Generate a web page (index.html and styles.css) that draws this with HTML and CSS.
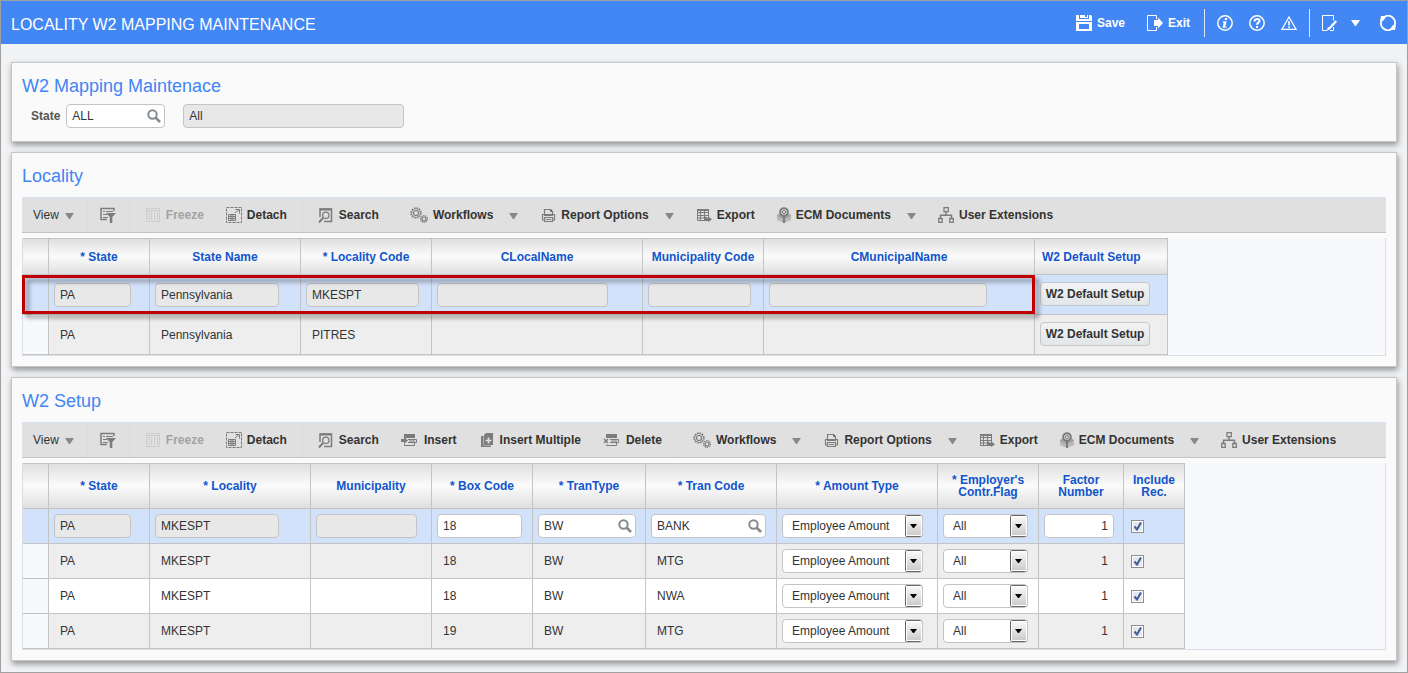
FILE: index.html
```
<!DOCTYPE html>
<html lang="en">
<head>
    <meta charset="UTF-8">
    <meta name="viewport" content="width=device-width, initial-scale=1.0">
    <title>Locality W2 Mapping Maintenance</title>
    <link rel="stylesheet" href="styles.css">
</head>
<body>
    <!-- icon set -->
    <svg class="sprite" aria-hidden="true">
        <symbol id="i-save" viewBox="0 0 16 16"><path fill="currentColor" fill-rule="evenodd" d="M0 0h3v4h10V0h2l1 1v5H0zM4 0h8v3H4zm5 0v2h2V0zM0 7h16v9H0zm3 2v5h10V9z"/></symbol>
        <symbol id="i-exit" viewBox="0 0 16 16"><path fill="none" stroke="currentColor" d="M9.500 4V.5h-9v15h9V12"/><path fill="currentColor" d="M7 5h4V2.500L16 8l-5 5.500V11H7z"/></symbol>
        <symbol id="i-info" viewBox="0 0 16 16"><circle cx="8" cy="8" r="7.200" fill="none" stroke="currentColor" stroke-width="1.500"/><path fill="currentColor" d="M8 3h2.500l-.5 2H7.600zM6 6.200h3.600L8.300 11.500h1.400l-.4 1.300H5.500l1.300-5.300H5.700z"/></symbol>
        <symbol id="i-help" viewBox="0 0 16 16"><circle cx="8" cy="8" r="7.200" fill="none" stroke="currentColor" stroke-width="1.500"/><path fill="none" stroke="currentColor" stroke-width="2" d="M5.500 6.500C5.500 3 10.600 3.200 10.500 6c0 1.800-2.500 1.600-2.500 3.800"/><path fill="currentColor" d="M7 11h2v2H7z"/></symbol>
        <symbol id="i-warn" viewBox="0 0 16 16"><path fill="none" stroke="currentColor" stroke-width="1.300" d="M8 2L1 14.300h14z"/><path fill="currentColor" d="M7.200 6h1.600v4.500H7.200zM7.200 11.500h1.600V13H7.200z"/></symbol>
        <symbol id="i-edit" viewBox="0 0 16 16"><path fill="none" stroke="currentColor" d="M11.500 5.500V.5H.5v15H5M8 15.500h3.500V12"/><path stroke="currentColor" stroke-width="2.200" d="M14.300 6L7 13.800"/><path fill="currentColor" d="M6 12l2.200 2L4.500 16z"/></symbol>
        <symbol id="i-refresh" viewBox="0 0 16 16"><path fill="none" stroke="currentColor" stroke-width="1.800" d="M5 1.500A7 7 0 0 1 14.500 10.500M11 14.500A7 7 0 0 1 1.500 5.500"/><path fill="currentColor" d="M1 1h5v1L3 6H0zM15 15h-5v-1l3-4h3z"/></symbol>
        <symbol id="i-arrow" viewBox="0 0 9 6"><path fill="currentColor" d="M0 0h9L5 6H4z"/></symbol>
        <symbol id="i-lens" viewBox="0 0 14 14"><circle cx="5.500" cy="5.500" r="4.200" fill="none" stroke="currentColor" stroke-width="2"/><path stroke="currentColor" stroke-width="2.600" d="M8.500 8.500l4.500 4.500"/></symbol>
        <symbol id="i-filter" viewBox="0 0 16 16"><path fill="none" stroke="currentColor" stroke-width="1.500" d="M14 4V1.500H1v11h6"/><path fill="none" stroke="currentColor" d="M3 4.500h2m1 0h7M3 7.500h4M3 10.500h5"/><path fill="currentColor" d="M6 6h10l-3.700 4v6h-2.500v-6z"/></symbol>
        <symbol id="i-freeze" viewBox="0 0 16 16"><path fill="none" stroke="currentColor" d="M1.500 1.500h13v13h-13zM1.500 3.500h13M6.500 5v8M9.500 5v8M12.500 5v8"/><path stroke="currentColor" stroke-width="2" stroke-dasharray="1 1" d="M4 5v8"/></symbol>
        <symbol id="i-detach" viewBox="0 0 16 16"><path fill="none" stroke="currentColor" stroke-dasharray="3 1" d="M.5 .5h15v15H.5z"/><path fill="none" stroke="currentColor" d="M2.500 7.500h7v6h-7zM3 9.500h6M3 11.500h6M5 8v5M7 8v5M9 6l4-3.500M9.500 2.500h4v4"/></symbol>
        <symbol id="i-search" viewBox="0 0 16 16"><path fill="none" stroke="currentColor" stroke-width="1.500" d="M2 10V2h11.500v12.500H6"/><path stroke="currentColor" stroke-width="2" d="M2 2.500h12M1 15.500l4-4.500"/><circle cx="7.800" cy="8.300" r="3.200" fill="none" stroke="currentColor" stroke-width="1.300"/></symbol>
        <symbol id="i-gears" viewBox="0 0 18 16"><g fill="none" stroke="currentColor"><circle cx="6" cy="6" r="5" stroke-width="1.400" stroke-dasharray="1.600 1"/><circle cx="6" cy="6" r="4.300" stroke-width=".7"/><circle cx="6" cy="6" r="2.500" stroke-width="1.200"/><circle cx="14" cy="12" r="3.400" stroke-width="1.200" stroke-dasharray="1.300 .8"/><circle cx="14" cy="12" r="2" stroke-width="1.200"/></g></symbol>
        <symbol id="i-print" viewBox="0 0 16 16"><path fill="none" stroke="currentColor" stroke-width="1.200" d="M4.500 7V2.500h6l2 2V7M4 13H2.500V7.500h12V13H13M4.500 10.500h8v4h-8z"/><path stroke="currentColor" d="M4 8.500h9M6 12.500h5M10.500 2.500v2h2"/></symbol>
        <symbol id="i-export" viewBox="0 0 16 16"><path fill="none" stroke="currentColor" d="M1.500 2.500h11v11h-11zM1.500 5.500h11M1.500 8.500h11M1.500 11h8M4.500 4v9.500M8.500 4v9.500"/><path fill="currentColor" d="M1 2h12v2H1zM8 9l4 2V9l4 3.500-4 2.500v-2H9z"/></symbol>
        <symbol id="i-ecm" viewBox="0 0 14 16"><path fill="currentColor" opacity=".6" d="M0 8l3-2 4 4 4-4 3 2v5l-7 3-7-3z"/><path fill="none" stroke="#e0e0e0" stroke-width=".7" d="M0 10l7 3.500 7-3.500M0 12l7 3.500 7-3.500"/><path fill="none" stroke="currentColor" stroke-width="2" d="M7 9v7"/><circle cx="7" cy="5" r="3.800" fill="#e0e0e0" stroke="currentColor" stroke-width="2"/><circle cx="7" cy="5" r="1.600" fill="none" stroke="currentColor"/></symbol>
        <symbol id="i-tree" viewBox="0 0 16 16"><path fill="none" stroke="currentColor" stroke-width="1.300" d="M6 .7h4.300v4H6zM.7 11.500h3.500v3.800H.7zM11.800 11.500h3.500v3.800h-3.500z"/><path fill="none" stroke="currentColor" stroke-width="1.500" d="M8 5v3M2.500 11V8.200h11V11"/></symbol>
        <symbol id="i-insert" viewBox="0 0 18 16"><path fill="currentColor" d="M3 2h11v4H3zM0 7h3V5l4 3.500L3 12v-2H0z"/><path fill="none" stroke="currentColor" d="M7 7.500h8.500v3H7M3.500 12v1.500h10V11M8 9h6"/></symbol>
        <symbol id="i-multi" viewBox="0 0 16 16"><path fill="currentColor" fill-rule="evenodd" d="M7 1h7v12H5V3zM8.700 5.500v2.200H6.500v1.600h2.200v2.200h1.600V9.300h2.200V7.700h-2.200V5.500z"/><path fill="currentColor" d="M2 4h2.500v9.500H12V15H2z"/></symbol>
        <symbol id="i-delete" viewBox="0 0 18 16"><path fill="currentColor" d="M3 2h11v4H3z"/><path fill="none" stroke="currentColor" d="M7 7.500h8.500v3H7M3.500 12.500v1h10V11M8 9h6"/><path stroke="currentColor" stroke-width="1.500" d="M1 7l4 4M5 7l-4 4"/></symbol>
    </svg>

    <header class="topbar">
        <h1>LOCALITY W2 MAPPING MAINTENANCE</h1>
        <div class="actions">
            <button class="action"><svg class="icon"><use href="#i-save"/></svg>Save</button>
            <button class="action"><svg class="icon"><use href="#i-exit"/></svg>Exit</button>
        </div>
        <div class="actions icons">
            <button class="action" aria-label="Information"><svg class="icon"><use href="#i-info"/></svg></button>
            <button class="action" aria-label="Help"><svg class="icon"><use href="#i-help"/></svg></button>
            <button class="action" aria-label="Warnings"><svg class="icon"><use href="#i-warn"/></svg></button>
        </div>
        <div class="actions last">
            <button class="action edit" aria-label="Edit page"><svg class="icon"><use href="#i-edit"/></svg><svg class="arrow"><use href="#i-arrow"/></svg></button>
            <button class="action" aria-label="Refresh"><svg class="icon"><use href="#i-refresh"/></svg></button>
        </div>
    </header>

    <main>
        <section class="panel filter">
            <h2>W2 Mapping Maintenace</h2>
            <div class="fields">
                <label for="state">State</label>
                <div class="lookup state">
                    <input id="state" type="text" value="ALL">
                    <button aria-label="Look up state"><svg><use href="#i-lens"/></svg></button>
                </div>
                <input class="box statename" type="text" value="All" aria-label="State description" readonly>
            </div>
        </section>

        <section class="panel">
            <h2>Locality</h2>
            <div class="toolbar">
                <div class="group view"><button class="tool">View<svg class="arrow"><use href="#i-arrow"/></svg></button></div>
                <div class="group query"><button class="tool" aria-label="Query by example"><svg class="icon"><use href="#i-filter"/></svg></button></div>
                <div class="group">
                    <button class="tool" disabled><svg class="icon"><use href="#i-freeze"/></svg>Freeze</button>
                    <button class="tool"><svg class="icon"><use href="#i-detach"/></svg>Detach</button>
                </div>
                <div class="group"><button class="tool"><svg class="icon"><use href="#i-search"/></svg>Search</button></div>
                <div class="group">
                    <button class="tool"><svg class="icon wide"><use href="#i-gears"/></svg>Workflows<svg class="arrow"><use href="#i-arrow"/></svg></button>
                    <button class="tool"><svg class="icon"><use href="#i-print"/></svg>Report Options<svg class="arrow"><use href="#i-arrow"/></svg></button>
                    <button class="tool"><svg class="icon"><use href="#i-export"/></svg>Export</button>
                    <button class="tool"><svg class="icon narrow"><use href="#i-ecm"/></svg>ECM Documents<svg class="arrow"><use href="#i-arrow"/></svg></button>
                    <button class="tool"><svg class="icon"><use href="#i-tree"/></svg>User Extensions</button>
                </div>
            </div>
            <div class="grid">
                <table class="locality">
                    <colgroup>
                        <col class="w-mark"><col class="w-100"><col class="w-150"><col class="w-130"><col class="w-210"><col class="w-120"><col class="w-270"><col class="w-132">
                    </colgroup>
                    <thead>
                        <tr>
                            <th></th>
                            <th>* State</th>
                            <th>State Name</th>
                            <th>* Locality Code</th>
                            <th>CLocalName</th>
                            <th>Municipality Code</th>
                            <th>CMunicipalName</th>
                            <th class="left">W2 Default Setup</th>
                        </tr>
                    </thead>
                    <tbody>
                        <tr class="selected">
                            <td></td>
                            <td class="edit"><input class="box f-77" type="text" value="PA" aria-label="State" readonly></td>
                            <td class="edit"><input class="box f-124" type="text" value="Pennsylvania" aria-label="State Name" readonly></td>
                            <td class="edit"><input class="box f-113" type="text" value="MKESPT" aria-label="Locality Code" readonly></td>
                            <td class="edit"><input class="box f-171" type="text" aria-label="CLocalName" readonly></td>
                            <td class="edit"><input class="box f-103" type="text" aria-label="Municipality Code" readonly></td>
                            <td class="edit"><input class="box f-218" type="text" aria-label="CMunicipalName" readonly></td>
                            <td class="edit"><button class="setup">W2 Default Setup</button></td>
                        </tr>
                        <tr>
                            <td></td>
                            <td>PA</td>
                            <td>Pennsylvania</td>
                            <td>PITRES</td>
                            <td></td>
                            <td></td>
                            <td></td>
                            <td class="edit"><button class="setup">W2 Default Setup</button></td>
                        </tr>
                    </tbody>
                </table>
                <div class="marker"></div>
            </div>
        </section>

        <section class="panel">
            <h2>W2 Setup</h2>
            <div class="toolbar">
                <div class="group view"><button class="tool">View<svg class="arrow"><use href="#i-arrow"/></svg></button></div>
                <div class="group query"><button class="tool" aria-label="Query by example"><svg class="icon"><use href="#i-filter"/></svg></button></div>
                <div class="group">
                    <button class="tool" disabled><svg class="icon"><use href="#i-freeze"/></svg>Freeze</button>
                    <button class="tool"><svg class="icon"><use href="#i-detach"/></svg>Detach</button>
                </div>
                <div class="group">
                    <button class="tool"><svg class="icon"><use href="#i-search"/></svg>Search</button>
                    <button class="tool"><svg class="icon wide"><use href="#i-insert"/></svg>Insert</button>
                    <button class="tool"><svg class="icon"><use href="#i-multi"/></svg>Insert Multiple</button>
                    <button class="tool"><svg class="icon wide"><use href="#i-delete"/></svg>Delete</button>
                </div>
                <div class="group">
                    <button class="tool"><svg class="icon wide"><use href="#i-gears"/></svg>Workflows<svg class="arrow"><use href="#i-arrow"/></svg></button>
                    <button class="tool"><svg class="icon"><use href="#i-print"/></svg>Report Options<svg class="arrow"><use href="#i-arrow"/></svg></button>
                    <button class="tool"><svg class="icon"><use href="#i-export"/></svg>Export</button>
                    <button class="tool"><svg class="icon narrow"><use href="#i-ecm"/></svg>ECM Documents<svg class="arrow"><use href="#i-arrow"/></svg></button>
                    <button class="tool"><svg class="icon"><use href="#i-tree"/></svg>User Extensions</button>
                </div>
            </div>
            <div class="grid">
                <table class="setups">
                    <colgroup>
                        <col class="w-mark"><col class="w-100"><col class="w-160"><col class="w-120"><col class="w-100"><col class="w-112"><col class="w-130"><col class="w-160"><col class="w-100"><col class="w-84"><col class="w-60">
                    </colgroup>
                    <thead>
                        <tr>
                            <th></th>
                            <th>* State</th>
                            <th>* Locality</th>
                            <th>Municipality</th>
                            <th>* Box Code</th>
                            <th>* TranType</th>
                            <th>* Tran Code</th>
                            <th>* Amount Type</th>
                            <th>* Employer's Contr.Flag</th>
                            <th>Factor Number</th>
                            <th>Include Rec.</th>
                        </tr>
                    </thead>
                    <tbody>
                        <tr class="selected">
                            <td></td>
                            <td class="edit"><input class="box f-77" type="text" value="PA" aria-label="State" readonly></td>
                            <td class="edit"><input class="box f-124" type="text" value="MKESPT" aria-label="Locality" readonly></td>
                            <td class="edit"><input class="box f-101" type="text" aria-label="Municipality" readonly></td>
                            <td class="edit"><input class="box f-85" type="text" value="18" aria-label="Box Code"></td>
                            <td class="edit"><div class="lookup f-98"><input type="text" value="BW" aria-label="TranType"><button aria-label="Look up TranType"><svg><use href="#i-lens"/></svg></button></div></td>
                            <td class="edit"><div class="lookup f-115"><input type="text" value="BANK" aria-label="Tran Code"><button aria-label="Look up Tran Code"><svg><use href="#i-lens"/></svg></button></div></td>
                            <td class="edit"><select class="f-141" aria-label="Amount Type"><option>Employee Amount</option></select></td>
                            <td class="edit"><select class="f-85" aria-label="Employer's Contr.Flag"><option>All</option></select></td>
                            <td class="edit"><input class="box num f-70" type="text" value="1" aria-label="Factor Number"></td>
                            <td class="check"><input type="checkbox" aria-label="Include Rec." checked></td>
                        </tr>
                        <tr>
                            <td></td>
                            <td>PA</td>
                            <td>MKESPT</td>
                            <td></td>
                            <td>18</td>
                            <td>BW</td>
                            <td>MTG</td>
                            <td class="edit"><select class="f-141" aria-label="Amount Type"><option>Employee Amount</option></select></td>
                            <td class="edit"><select class="f-85" aria-label="Employer's Contr.Flag"><option>All</option></select></td>
                            <td class="num">1</td>
                            <td class="check"><input type="checkbox" aria-label="Include Rec." checked></td>
                        </tr>
                        <tr class="plain">
                            <td></td>
                            <td>PA</td>
                            <td>MKESPT</td>
                            <td></td>
                            <td>18</td>
                            <td>BW</td>
                            <td>NWA</td>
                            <td class="edit"><select class="f-141" aria-label="Amount Type"><option>Employee Amount</option></select></td>
                            <td class="edit"><select class="f-85" aria-label="Employer's Contr.Flag"><option>All</option></select></td>
                            <td class="num">1</td>
                            <td class="check"><input type="checkbox" aria-label="Include Rec." checked></td>
                        </tr>
                        <tr>
                            <td></td>
                            <td>PA</td>
                            <td>MKESPT</td>
                            <td></td>
                            <td>19</td>
                            <td>BW</td>
                            <td>MTG</td>
                            <td class="edit"><select class="f-141" aria-label="Amount Type"><option>Employee Amount</option></select></td>
                            <td class="edit"><select class="f-85" aria-label="Employer's Contr.Flag"><option>All</option></select></td>
                            <td class="num">1</td>
                            <td class="check"><input type="checkbox" aria-label="Include Rec." checked></td>
                        </tr>
                    </tbody>
                </table>
            </div>
        </section>
    </main>
</body>
</html>
```
FILE: styles.css
```
* {
    box-sizing: border-box;
}

body {
    margin: 0;
    min-height: 100vh;
    border: 1px solid #a0a0a0;
    background-color: #f1f2f4;
    color: #333;
    font-family: "Liberation Sans", Arial, sans-serif;
    font-size: 12px;
}

button,
input,
select {
    margin: 0;
    font: inherit;
    color: inherit;
}

button {
    padding: 0;
    border: none;
    background: none;
    cursor: pointer;
}

.sprite {
    position: absolute;
    width: 0;
    height: 0;
}

.icon {
    flex: none;
    width: 16px;
    height: 16px;
}

.icon.wide {
    width: 18px;
}

.icon.narrow {
    width: 14px;
}

.arrow {
    flex: none;
    width: 9px;
    height: 6px;
}

/* top bar */
.topbar {
    display: flex;
    align-items: center;
    height: 43px;
    padding: 0 11px 0 10px;
    background-color: #4387f4;
    color: #fff;
}

.topbar h1 {
    flex: 1;
    margin: 0;
    padding-top: 4px;
    font-size: 16px;
    font-weight: normal;
}

.actions {
    display: flex;
    align-items: center;
    gap: 22px;
    height: 28px;
    padding-right: 14px;
}

.actions.icons {
    gap: 16px;
    padding: 0 12px;
    border: solid #dce8fd;
    border-width: 0 1px;
}

.actions.last {
    gap: 20px;
    padding: 0 0 0 12px;
}

.action {
    display: flex;
    align-items: center;
    gap: 5px;
    font-weight: bold;
}

.action.edit {
    gap: 13px;
}

/* panels */
main {
    display: flex;
    flex-direction: column;
    gap: 10px;
    padding: 18px 10px 11px;
}

.panel {
    padding: 12px 10px 10px;
    border: 1px solid #c4c6c8;
    background-color: #fafafa;
    box-shadow: 1px 3px 6px rgba(0, 0, 0, 0.4);
}

.panel h2 {
    margin: 0 0 10px;
    font-size: 18px;
    font-weight: normal;
    line-height: 22px;
    color: #4285f4;
}

.filter {
    padding-bottom: 13px;
}

.filter h2 {
    margin-bottom: 7px;
}

.fields {
    display: flex;
    align-items: center;
    padding-left: 9px;
}

.fields label {
    margin-right: 6px;
    font-weight: bold;
    color: #555;
}

/* form controls */
.box,
.lookup,
select {
    display: block;
    height: 24px;
    padding: 0 5px;
    border: 1px solid #c4c4c4;
    border-radius: 4px;
    background-color: #fff;
}

.box[readonly] {
    background-color: #e8e8e8;
}

.lookup {
    display: flex;
    align-items: center;
    padding-right: 3px;
}

.lookup input {
    flex: 1;
    min-width: 0;
    padding: 0;
    border: none;
    background: none;
}

.lookup svg {
    display: block;
    width: 14px;
    height: 14px;
    color: #858a8f;
}

.state {
    width: 99px;
    margin-right: 18px;
}

.statename {
    width: 221px;
}

select {
    appearance: none;
    padding: 0 20px 0 9px;
    background: #fff url("data:image/svg+xml,%3Csvg xmlns='http://www.w3.org/2000/svg' width='18' height='22'%3E%3ClinearGradient id='g' x2='0' y2='1'%3E%3Cstop stop-color='%23f8f8f8'/%3E%3Cstop offset='1' stop-color='%23ccc'/%3E%3C/linearGradient%3E%3Crect x='.5' y='.5' width='17' height='21' rx='1' fill='%23fff' stroke='%23666'/%3E%3Crect x='2' y='2' width='14' height='18' fill='url(%23g)'/%3E%3Cpath d='M5 9h7l-3 4h-1z'/%3E%3C/svg%3E") right center no-repeat;
    background-origin: border-box;
}

input[type="checkbox"] {
    display: block;
    appearance: none;
    width: 13px;
    height: 13px;
    border: 1px solid #8e8f8f;
    background: #e3e6ea url("data:image/svg+xml,%3Csvg xmlns='http://www.w3.org/2000/svg' width='11' height='11'%3E%3Cpath d='M.5 .5h10v10H.5z' fill='none' stroke='%23fff'/%3E%3Cpath d='M2.500 5.500L5 8.500 9 1.500' fill='none' stroke='%23445c9c' stroke-width='2'/%3E%3C/svg%3E") center no-repeat;
}

.setup {
    display: block;
    width: 110px;
    height: 24px;
    margin-bottom: 2px;
    border: 1px solid #c4c6c8;
    border-radius: 4px;
    background: linear-gradient(#f2f3f4, #e2e6e9);
    font-weight: bold;
    white-space: nowrap;
}

.num {
    text-align: right;
}

/* toolbars */
.toolbar {
    display: flex;
    height: 36px;
    margin-bottom: 5px;
    border-top: 1px solid #d5e1f6;
    border-bottom: 1px solid #c4c4c4;
    background-color: #e0e0e0;
}

.group {
    display: flex;
    align-items: center;
    gap: 22px;
    padding: 0 15px;
    border-right: 1px solid #d5dde5;
}

.group:last-child {
    border-right: none;
}

.group.view {
    padding: 0 13px 0 11px;
}

.group.query {
    padding: 0 13px 0 12px;
}

.tool {
    display: flex;
    align-items: center;
    gap: 5px;
    font-weight: bold;
    white-space: nowrap;
}

.view .tool {
    font-weight: normal;
}

.tool:disabled {
    color: #a3a3a3;
}

.tool .icon {
    color: #7c7c7c;
}

.tool:disabled .icon {
    color: #cdcdcd;
}

.tool .arrow {
    margin: 2px 0 0 11px;
    color: #85898d;
}

.view .tool .arrow {
    margin-left: 1px;
}

/* data grids */
.grid {
    position: relative;
    border: solid #d6dfe6;
    border-width: 0 1px 1px;
    background-color: #f8f9fd;
}

table {
    width: 0;
    border-spacing: 0;
    table-layout: fixed;
}

th,
td {
    border-right: 1px solid #c4c4c4;
    border-bottom: 1px solid #c4c4c4;
}

th {
    padding: 0 6px;
    border-top: 1px solid #c4c4c4;
    background: linear-gradient(#dfdfdf, #fbfbfb 50%, #dfdfdf);
    color: #1155cc;
    line-height: 12px;
}

th.left {
    padding-left: 7px;
    text-align: left;
}

td {
    padding: 0 11px;
    background-color: #eee;
}

td.edit {
    padding: 0 5px;
}

td.check {
    padding: 0 7px;
}

td.num {
    padding-right: 15px;
}

.plain td {
    background-color: #fff;
}

td:first-child {
    background-color: #f8f9fd;
}

.selected td {
    background-color: #d3e2fb;
}

.locality th {
    height: 37px;
}

.locality td {
    height: 40px;
}

.setups th {
    height: 46px;
}

.setups td {
    height: 35px;
}

/* column widths */
.w-mark { width: 26px; }
.w-60 { width: 61px; }
.w-84 { width: 85px; }
.w-100 { width: 101px; }
.w-112 { width: 113px; }
.w-120 { width: 121px; }
.w-130 { width: 131px; }
.w-132 { width: 133px; }
.w-150 { width: 151px; }
.w-160 { width: 161px; }
.w-210 { width: 211px; }
.w-270 { width: 271px; }

/* field widths */
.f-70 { width: 70px; }
.f-77 { width: 77px; }
.f-85 { width: 85px; }
.f-98 { width: 98px; }
.f-101 { width: 101px; }
.f-103 { width: 103px; }
.f-113 { width: 113px; }
.f-115 { width: 115px; }
.f-124 { width: 124px; }
.f-141 { width: 141px; }
.f-171 { width: 171px; }
.f-218 { width: 218px; }

/* red frame over the selected row */
.marker {
    position: absolute;
    top: 37px;
    left: -1px;
    width: 1013px;
    height: 39px;
    border: 3px solid #c00000;
    filter: drop-shadow(4px 4px 2px rgba(0, 0, 0, 0.4));
    pointer-events: none;
}
```
